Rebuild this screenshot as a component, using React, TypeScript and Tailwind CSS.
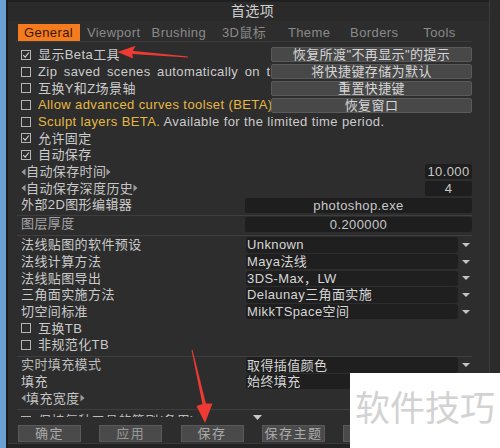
import React from 'react';

const row = 'h-[16.7px] flex items-center shrink-0';

function Box({ on }: { on?: boolean }) {
  return (
    <span className="w-[10px] h-[10px] border border-[#b5b5b5] flex items-center justify-center shrink-0">
      {on && (
        <svg width="8" height="8" viewBox="0 0 8 8">
          <path d="M1.2 4.1 L3.2 6.1 L6.9 1.5" fill="none" stroke="#d4d4d4" strokeWidth="1.1" />
        </svg>
      )}
    </span>
  );
}

function Btn({ children }: { children: React.ReactNode }) {
  return (
    <div className="w-[201px] h-[15px] shrink-0 flex items-center justify-center bg-[#484848] border border-[#5a5a5a] rounded-[2px] text-[#d6d6d6] leading-none">
      {children}
    </div>
  );
}

function Field({ w, children }: { w: string; children: React.ReactNode }) {
  return (
    <div className={`${w} h-[15px] shrink-0 flex items-center justify-center bg-[#1e1e1e] rounded-[2px] text-[#c8c8c8] leading-none`}>
      {children}
    </div>
  );
}

function Drop({ children }: { children: React.ReactNode }) {
  return (
    <div className="w-[226px] shrink-0 flex items-center">
      <div className="w-[212px] h-[15.4px] flex items-center pl-[1px] bg-[#1f1f1f] rounded-[3px] text-[#d6d6d6] leading-none whitespace-nowrap overflow-hidden">
        {children}
      </div>
      <div className="flex-1 flex justify-end pr-[2px]">
        <svg width="8" height="4" viewBox="0 0 8 4">
          <path d="M0 0 H8 L4 4 Z" fill="#c4c4c4" />
        </svg>
      </div>
    </div>
  );
}

function Spin({ text }: { text: string }) {
  return (
    <span className="flex items-center text-[#c6c6c6]">
      <svg width="5" height="8" viewBox="0 0 5 8">
        <path d="M4.5 0.5 L0.5 4 L4.5 7.5 Z" fill="#9c9c9c" />
      </svg>
      <span>{text}</span>
      <svg width="5" height="8" viewBox="0 0 5 8">
        <path d="M0.5 0.5 L4.5 4 L0.5 7.5 Z" fill="#9c9c9c" />
      </svg>
    </span>
  );
}

function CheckLabel({ on, children, extra = '' }: { on?: boolean; children: React.ReactNode; extra?: string }) {
  return (
    <div className={`flex-1 min-w-0 flex items-center gap-[7px] overflow-hidden whitespace-nowrap ${extra}`}>
      <Box on={on} />
      <span>{children}</span>
    </div>
  );
}

const Line = () => <div className="h-px bg-[#3e3e3e] -ml-[4px] shrink-0" />;

const tabs = ['General', 'Viewport', 'Brushing', '3D鼠标', 'Theme', 'Borders', 'Tools'];

export default function App() {
  return (
    <div className="relative w-[500px] h-[448px] overflow-hidden flex bg-[#292929] font-['Liberation_Sans','Noto_Sans_CJK_SC',sans-serif] text-[13px] tracking-[0.4px] text-[#cbcbcb]">
      <div className="w-[6px] bg-[#6c9fd4] shrink-0" />
      <div className="w-[2px] bg-[#1c1c1c] shrink-0" />

      <div className="w-[482px] shrink-0 flex flex-col bg-[#2d2d2d] border-r border-[#3b3b3b]">
        {/* title bar */}
        <div className="h-[21px] shrink-0 flex items-center justify-center pl-[8px] bg-[#2a2a2a] border-t-2 border-[#202020] text-[14px] text-[#cfcfcf]">
          首选项
        </div>

        {/* tabs */}
        <div className="mt-[3px] mx-[8px] mr-[17px] h-[18px] shrink-0 flex border-b border-[#3a3a3a]">
          {tabs.map((t) => (
            <div key={t} className="flex-1 h-[17px] flex justify-center">
              {t === 'General' ? (
                <div className="w-[62px] h-[17px] flex items-center justify-center bg-[#f47c1e] text-[#3a1804]">{t}</div>
              ) : (
                <div className="h-[17px] flex items-center text-[#8a8a8a]">{t}</div>
              )}
            </div>
          ))}
        </div>

        {/* settings */}
        <div className="shrink-0 flex flex-col pt-[4.6px] pl-[13px] pr-[17px]">
          <div className={row}>
            <CheckLabel on>显示Beta工具</CheckLabel>
            <Btn>恢复所渡"不再显示"的提示</Btn>
          </div>
          <div className={row}>
            <CheckLabel extra="[word-spacing:2.5px]">Zip saved scenes automatically on the next save</CheckLabel>
            <Btn>将快捷键存储为默认</Btn>
          </div>
          <div className={row}>
            <CheckLabel>互换Y和Z场景轴</CheckLabel>
            <Btn>重置快捷键</Btn>
          </div>
          <div className={row}>
            <CheckLabel>
              <span className="text-[#e6b843]">Allow advanced curves toolset (BETA)</span>
            </CheckLabel>
            <Btn>恢复窗口</Btn>
          </div>
          <div className={row}>
            <CheckLabel>
              <span className="text-[#e6b843]">Sculpt layers BETA.</span> Available for the limited time period.
            </CheckLabel>
          </div>
          <div className={row}>
            <CheckLabel on>允许固定</CheckLabel>
          </div>
          <div className={row}>
            <CheckLabel on>自动保存</CheckLabel>
          </div>
          <div className={`${row} justify-between`}>
            <Spin text="自动保存时间" />
            <Field w="w-[47px]">10.000</Field>
          </div>
          <div className={`${row} justify-between`}>
            <Spin text="自动保存深度历史" />
            <Field w="w-[47px]">4</Field>
          </div>
          <div className={`${row} justify-between`}>
            <span>外部2D图形编辑器</span>
            <Field w="w-[227px]">photoshop.exe</Field>
          </div>

          <div className="h-[1.4px] shrink-0" />
          <Line />
          <div className={`${row} justify-between`}>
            <span className="text-[#a4a4a4]">图层厚度</span>
            <Field w="w-[227px]">0.200000</Field>
          </div>
          <div className="h-[2.3px] shrink-0" />
          <Line />
          <div className="h-[0.7px] shrink-0" />

          <div className={`${row} justify-between`}>
            <span>法线贴图的软件预设</span>
            <Drop>Unknown</Drop>
          </div>
          <div className={`${row} justify-between`}>
            <span>法线计算方法</span>
            <Drop>Maya法线</Drop>
          </div>
          <div className={`${row} justify-between`}>
            <span>法线贴图导出</span>
            <Drop>3DS-Max，LW</Drop>
          </div>
          <div className={`${row} justify-between`}>
            <span>三角面实施方法</span>
            <Drop>Delaunay三角面实施</Drop>
          </div>
          <div className={`${row} justify-between`}>
            <span>切空间标准</span>
            <Drop>MikkTSpace空间</Drop>
          </div>
          <div className={row}>
            <CheckLabel>互换TB</CheckLabel>
          </div>
          <div className={row}>
            <CheckLabel>非规范化TB</CheckLabel>
          </div>

          <div className="h-[2.4px] shrink-0" />
          <Line />
          <div className={`${row} justify-between`}>
            <span className="text-[#bdbdbd]">实时填充模式</span>
            <Drop>取得插值颜色</Drop>
          </div>
          <div className={`${row} justify-between`}>
            <span>填充</span>
            <Drop>始终填充</Drop>
          </div>
          <div className={row}>
            <Spin text="填充宽度" />
          </div>
          <div className="h-[2.4px] shrink-0" />
          <Line />

          {/* clipped row at the scroll edge */}
          <div className="relative h-[14px] shrink-0">
            <div className="h-[7px] overflow-hidden">
              <div className="pt-[1px] flex items-center gap-[7px] whitespace-nowrap text-[#bcbcbc]">
                <Box />
                <span>保持每种工具的笔刷(备用)</span>
              </div>
            </div>
            <svg className="absolute left-[232px] top-[5px]" width="9" height="5" viewBox="0 0 9 5">
              <path d="M0 0 H9 L4.5 5 Z" fill="#c8c8c8" />
            </svg>
          </div>
        </div>

        {/* bottom buttons */}
        <div className="h-[17px] mt-[0.5px] shrink-0 flex gap-[18.3px] pl-[10px]">
          {['确定', '应用', '保存', '保存主题', '取消'].map((b, i) => (
            <div
              key={b}
              className={`w-[63px] h-[17px] flex items-center justify-center bg-[#4a4a4a] border border-[#5a5a5a] tracking-[1.5px] leading-none ${
                i === 1 ? 'text-[#989898]' : 'text-[#ababab]'
              }`}
            >
              {b}
            </div>
          ))}
        </div>
        <div className="flex-1 mt-px bg-[#222222] border-t border-[#3a3a3a]" />
      </div>
      <div className="flex-1 bg-[#2b2b2b]" />

      {/* watermark */}
      <div className="absolute left-[350px] top-[373px] w-[150px] h-[75px] bg-white pt-[15px] pl-[5px] text-[35px] leading-none tracking-normal text-[#d2d2d2] font-['Noto_Sans_CJK_SC',sans-serif]">
        软件技巧
      </div>

      {/* red annotation arrows */}
      <svg className="absolute left-0 top-0 pointer-events-none" width="500" height="448" viewBox="0 0 500 448">
        <polygon points="188,56.6 188,57.6 132,54 132,50.8" fill="#ee3a32" />
        <polygon points="117.5,52 135.5,45.8 132,52.4 133,58.4" fill="#ee3a32" />
        <polygon points="191.5,350 192.6,350 206,404 202.5,404.6" fill="#ee3a32" />
        <polygon points="205,423 196.5,406 204.2,403.5 212.5,403.5" fill="#ee3a32" />
      </svg>
    </div>
  );
}
